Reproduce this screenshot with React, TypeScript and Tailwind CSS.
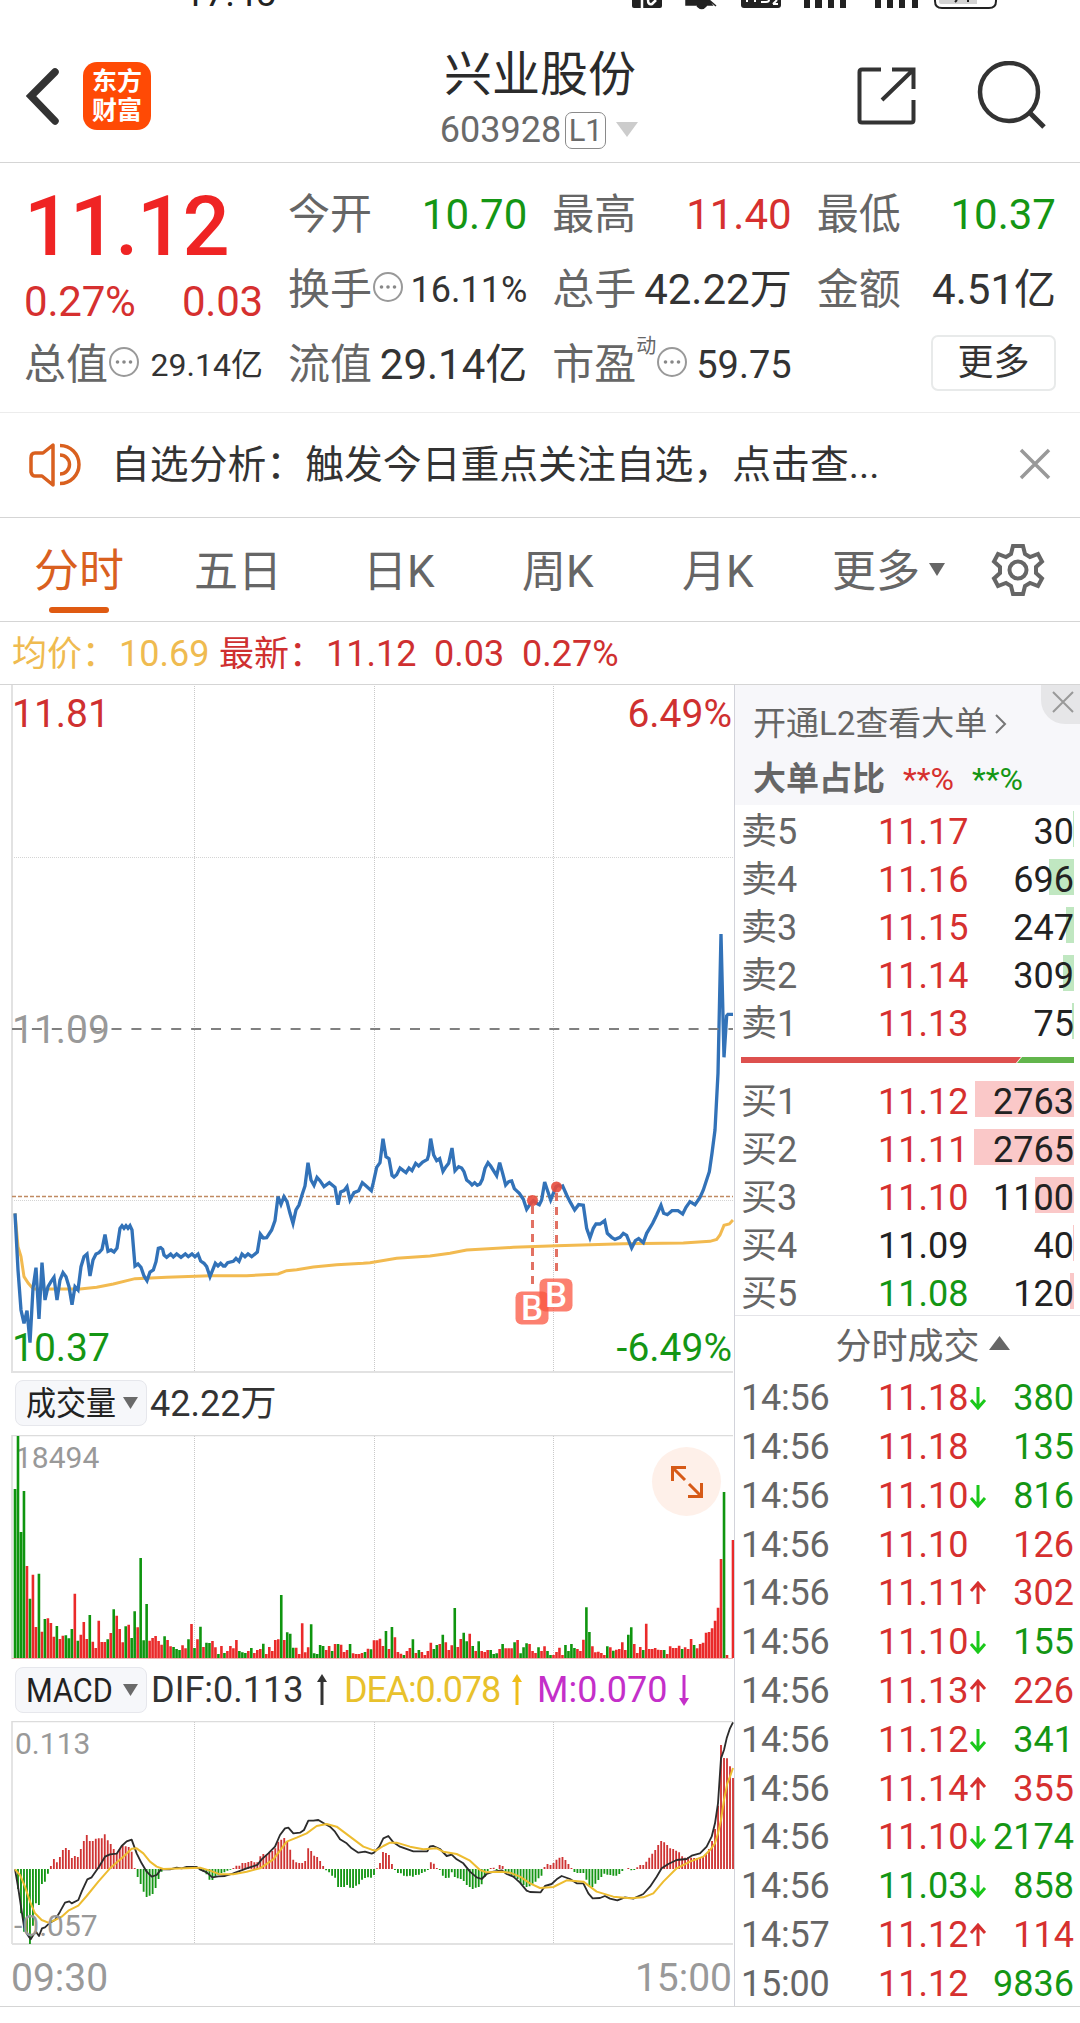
import React from 'react';
import clsx from 'clsx';

type Tone = 'up' | 'down' | 'flat';

interface Level {
  label: string;
  price: string;
  qty: string;
  bar: number;
  tone: Tone;
}

interface Trade {
  time: string;
  price: string;
  qty: string;
  arrow?: 'up' | 'down';
  tone: Tone;
  side: Tone;
}

const toneClass: Record<Tone, string> = {
  up: 'text-[#d6302f]',
  down: 'text-[#149614]',
  flat: 'text-[#222]',
};

const SELLS: Level[] = [
  { label: '卖5', price: '11.17', qty: '30', bar: 1, tone: 'up' },
  { label: '卖4', price: '11.16', qty: '696', bar: 25, tone: 'up' },
  { label: '卖3', price: '11.15', qty: '247', bar: 8, tone: 'up' },
  { label: '卖2', price: '11.14', qty: '309', bar: 11, tone: 'up' },
  { label: '卖1', price: '11.13', qty: '75', bar: 2, tone: 'up' },
];

const BUYS: Level[] = [
  { label: '买1', price: '11.12', qty: '2763', bar: 99, tone: 'up' },
  { label: '买2', price: '11.11', qty: '2765', bar: 100, tone: 'up' },
  { label: '买3', price: '11.10', qty: '1100', bar: 39, tone: 'up' },
  { label: '买4', price: '11.09', qty: '40', bar: 1, tone: 'flat' },
  { label: '买5', price: '11.08', qty: '120', bar: 4, tone: 'down' },
];

const TRADES: Trade[] = [
  { time: '14:56', price: '11.18', arrow: 'down', qty: '380', tone: 'up', side: 'down' },
  { time: '14:56', price: '11.18', qty: '135', tone: 'up', side: 'down' },
  { time: '14:56', price: '11.10', arrow: 'down', qty: '816', tone: 'up', side: 'down' },
  { time: '14:56', price: '11.10', qty: '126', tone: 'up', side: 'up' },
  { time: '14:56', price: '11.11', arrow: 'up', qty: '302', tone: 'up', side: 'up' },
  { time: '14:56', price: '11.10', arrow: 'down', qty: '155', tone: 'up', side: 'down' },
  { time: '14:56', price: '11.13', arrow: 'up', qty: '226', tone: 'up', side: 'up' },
  { time: '14:56', price: '11.12', arrow: 'down', qty: '341', tone: 'up', side: 'down' },
  { time: '14:56', price: '11.14', arrow: 'up', qty: '355', tone: 'up', side: 'up' },
  { time: '14:56', price: '11.10', arrow: 'down', qty: '2174', tone: 'up', side: 'down' },
  { time: '14:56', price: '11.03', arrow: 'down', qty: '858', tone: 'down', side: 'down' },
  { time: '14:57', price: '11.12', arrow: 'up', qty: '114', tone: 'up', side: 'up' },
  { time: '15:00', price: '11.12', qty: '9836', tone: 'up', side: 'down' },
];

// Chart series are kept in thirds of a pixel, one list per trading session.
const AFTERNOON_X = 1110;

const PRICE_AM = '45,940 54,1110 63,1230 72,1270 81,1232 90,1328 99,1165 108,1103 117,1257 126,1088 135,1200 144,1160 153,1145 162,1132 171,1200 180,1140 189,1118 198,1130 207,1160 216,1214 225,1160 234,1170 243,1100 252,1070 261,1062 270,1128 279,1080 288,1062 297,1058 306,1048 315,1004 324,1054 333,1050 342,1056 351,1044 360,985 366,977 372,985 378,977 384,985 390,977 396,990 405,1098 414,1092 423,1102 432,1128 441,1142 450,1116 460,1110 468,1085 475,1045 482,1043 488,1048 492,1065 500,1072 512,1062 520,1071 530,1062 543,1072 556,1062 565,1070 576,1062 585,1070 594,1062 602,1083 612,1090 620,1100 630,1130 646,1090 654,1098 662,1090 670,1098 675,1098 683,1088 700,1084 708,1075 717,1084 726,1062 735,1070 744,1062 755,1070 772,1056 781,1002 790,1014 800,1013 815,990 825,962 834,890 843,913 852,890 861,905 870,940 879,970 888,930 897,915 906,885 915,858 924,788 933,840 942,856 951,832 960,842 972,860 988,848 1005,862 1014,914 1022,876 1032,872 1041,860 1050,900 1062,878 1076,872 1087,848 1096,856 1114,872';
const PRICE_PM = '10,848 20,802 30,788 39,716 48,770 57,776 66,826 72,831 80,824 90,804 100,812 108,818 117,804 126,812 137,790 146,798 158,786 172,778 176,765 182,716 191,765 200,782 209,776 219,814 228,800 236,790 246,744 255,812 266,800 275,804 282,815 290,840 300,848 306,855 314,848 322,856 330,852 337,838 345,805 354,788 362,798 380,827 389,788 398,820 407,855 416,845 425,843 433,866 448,880 460,898 470,928 482,910 490,902 500,910 508,914 515,900 524,846 532,870 542,900 550,880 558,860 566,856 574,860 578,858 590,885 600,905 614,930 626,914 640,916 650,985 660,1014 670,985 678,972 690,972 704,962 712,1000 725,1012 735,1018 750,1012 760,1000 770,1006 785,1044 796,1022 806,1016 820,1028 830,1000 848,970 860,945 873,916 881,940 892,944 906,932 924,932 938,942 948,922 960,905 975,914 990,892 1000,870 1018,815 1026,760 1035,690 1044,520 1053,102 1062,472 1070,348 1074,343 1089,343';

const AVG_AM = '45,940 54,1040 63,1070 72,1130 85,1150 100,1167 240,1167 290,1162 340,1152 405,1136 500,1132 630,1127 740,1127 834,1122 860,1112 890,1109 940,1101 1010,1094 1090,1090';
const AVG_PM = '0,1088 80,1075 180,1068 240,1060 290,1050 430,1042 560,1037 760,1031 940,1029 1020,1024 1040,1018 1050,1005 1062,976 1078,972 1089,960';

const DIF_AM = '45,568 54,620 63,680 72,740 81,762 92,778 100,765 108,755 117,768 126,745 135,742 150,728 165,720 180,695 195,668 208,664 215,670 235,660 245,635 262,598 275,592 297,560 315,530 330,523 350,521 365,498 380,484 395,479 410,520 425,550 440,575 455,590 470,585 483,568 510,568 530,563 545,565 560,561 590,561 600,568 620,577 637,592 655,589 675,588 700,580 740,565 772,555 785,538 805,520 825,500 840,465 855,445 865,443 880,460 900,458 912,450 925,422 940,422 955,420 975,432 990,440 1005,455 1020,478 1040,490 1055,505 1075,518 1095,515';
const DIF_PM = '5,521 12,518 28,500 40,475 55,468 70,487 90,500 130,514 172,514 180,499 190,498 210,507 230,528 245,524 260,538 280,550 300,575 320,592 335,597 350,582 370,575 395,571 410,582 430,590 450,608 470,632 480,636 512,637 525,618 545,612 560,598 575,588 600,597 620,610 640,610 655,640 668,655 690,654 705,648 720,656 742,661 765,652 790,656 820,642 840,620 860,590 875,565 895,552 920,540 950,537 965,527 990,520 1010,500 1025,470 1035,430 1044,370 1053,235 1062,210 1070,175 1080,145 1089,127';

const DEA_AM = '45,568 60,585 75,620 90,665 105,700 125,720 145,728 165,720 185,710 205,692 235,677 260,648 295,605 330,565 370,530 395,506 410,505 430,520 450,545 470,560 490,567 600,563 630,572 660,583 700,583 740,575 780,565 820,538 860,485 890,473 920,460 950,438 980,432 1010,440 1050,470 1090,500';
const DEA_PM = '5,509 18,512 40,498 60,488 80,488 120,500 160,508 200,505 220,515 260,522 300,542 330,570 350,577 395,575 420,578 450,590 480,610 510,624 550,621 590,601 640,605 680,635 730,650 780,655 820,652 850,640 880,605 920,565 960,545 1000,530 1020,510 1035,490 1044,460 1053,420 1062,360 1072,310 1080,290 1089,264';

// Minute volumes, negative for a falling minute.
const VOLUME = [
  -507, -666, -378, -501, 276, -178, 250, 93, -253, 79, -117, 119, 105, 64, -96, 57, 67, -68, -59, -87,
  193, -52, 70, 108, 57, -129, 49, 30, 112, 48, 48, -56, 75, -146, 127, 87, 47, -95, 100, -60,
  -140, 92, -300, -53, -162, 52, 60, 66, 51, 40, -65, 54, 35, -33, -27, -24, 38, 29, -56, 102,
  -30, 56, -94, 33, -46, -45, 51, 32, -12, 36, -15, 21, 36, 29, 54, -21, -17, -15, 21, -30,
  15, 24, 27, -43, 12, 33, 21, 54, 56, -189, 54, -77, -73, -31, 31, 12, 104, 17, 32, -101,
  -14, -12, -39, -36, 24, 36, -21, 42, -42, 40, 18, 24, -42, 14, 12, 12, 15, -18, 28, -26,
  53, 53, 58, 36, -81, 27, -93, 62, 18, 13, -9, 21, 30, -56, 15, -24, 18, 9, 21, 46,
  -27, -39, 42, -70, 47, 24, 38, -150, 33, 57, -76, -50, 73, -36, 21, -50, 21, 18, 24, -24,
  -12, -14, 27, -42, 29, 29, 29, -47, 54, -14, -32, -44, 42, 21, 15, -32, 21, 35, -21, -9,
  9, 18, 31, 9, -39, -21, -42, -30, 27, 21, 55, -152, -78, 35, 17, 19, 15, 9, -35, 32,
  -22, 25, 27, 47, 24, -70, -92, 42, 15, 33, -24, 103, 27, 27, 30, 25, 24, -24, 12, 35,
  30, 30, 37, -27, 32, 27, 57, -39, 29, 42, 46, 76, 78, 89, 112, 151, 297, -498, 9, 0, 354,
];

const MACD = [
  0, -60, -133, -188, -195, -225, -170, -103, -108, -45, -38, -14, 9, 30, 20, 36, 57, 63, 57, 33,
  39, 36, 60, 84, 102, 84, 84, 91, 92, 92, 104, 86, 75, 60, 47, 60, 70, 68, 66, 52,
  3, -24, -45, -68, -84, -80, -75, -57, -30, -8, 2, 0, 2, 3, 2, 0, 3, 2, 2, 3,
  2, 2, -4, -8, -16, -32, -33, -22, -18, -12, -10, -5, -2, 3, 10, 10, 18, 18, 21, 24,
  20, 20, 38, 45, 42, 48, 54, 62, 82, 88, 93, 84, 58, 28, 20, 18, 18, 24, 62, 54,
  40, 36, 24, 9, -4, -10, -20, -26, -54, -54, -54, -48, -56, -57, -50, -46, -32, -27, -25,
  -26, -18, 2, 18, 51, 48, 42, 15, -3, -12, -13, -20, -22, -20, -23, -18, -17, -12, -8, -3, 20,
  16, 3, -3, -20, -27, -26, -10, -24, -28, -30, -36, -48, -54, -60, -56, -54, -46, -24, -6, 3,
  4, -3, 12, 9, -8, -13, -18, -24, -30, -42, -48, -54, -52, -44, -38, -28, -20, 6, 15, 12,
  18, 28, 34, 36, 27, 15, 3, -9, -12, -12, -12, -32, -52, -54, -44, -33, -24, -14, -17, -18,
  -20, -20, -15, -6, 0, 3, -4, -3, 5, 12, 12, 22, 34, 46, 57, 72, 84, 80, 72, 62,
  60, 55, 50, 38, 34, 36, 34, 33, 33, 34, 38, 45, 60, 84, 120, 190, 372, 333, 332, 308, 273,
];

function joinSessions(am: string, pm: string) {
  const shifted = pm.split(' ').map(p => {
    const [x, y] = p.split(',').map(Number);
    return `${x + AFTERNOON_X},${y}`;
  });
  return `${am} ${shifted.join(' ')}`;
}

function Bars({ data, base, width }: { data: number[]; base: number; width: number }) {
  const step = 2154 / 240;
  const path = (up: boolean, signed: boolean) =>
    data
      .map((v, i) => {
        if (v === 0 || v > 0 !== up) return '';
        const x = 45 + i * step - width / 2;
        const top = signed ? base - v : base - Math.abs(v);
        return `M${x.toFixed(1)} ${base}V${top}h${width}V${base}z`;
      })
      .join('');
  const signed = data === MACD;
  return (
    <>
      <path d={path(true, signed)} fill={signed ? '#cf3434' : '#ea2a2a'} />
      <path d={path(false, signed)} fill={signed ? '#159615' : '#0f950f'} />
    </>
  );
}

function GridLines({ height }: { height: number }) {
  return (
    <g stroke="#c9c9c9" strokeWidth="1" strokeDasharray="1 1">
      <path d={`M194.5 1V${height}`} />
      <path d={`M374.5 1V${height}`} />
      <path d={`M553.5 1V${height}`} />
    </g>
  );
}

function Dots() {
  return (
    <svg className="size-[30px] shrink-0" viewBox="0 0 30 30">
      <circle cx="15" cy="15" r="14" fill="none" stroke="#999" strokeWidth="2" />
      <g fill="#888">
        <circle cx="8.5" cy="15" r="1.8" />
        <circle cx="15" cy="15" r="1.8" />
        <circle cx="21.5" cy="15" r="1.8" />
      </g>
    </svg>
  );
}

function StatusBar() {
  return (
    <div className="flex h-[10px] pl-[184px]">
      <span className="-mt-[28px] w-[446px] text-[37px] leading-[44px] text-[#222]">17:45</span>
      <svg width="370" height="10" viewBox="630 0 370 10" fill="#222">
        <path d="M632 0h30v6q0 2-2 2h-26q-2 0-2-2z" />
        <path d="M642 0v8M648 0q0 5 4 4l4-4" fill="none" stroke="#fff" strokeWidth="2.500" />
        <path d="M686 0h22l4 5h-26zM697 6h9q-4 5-9 0M709 0l7 6" stroke="#222" strokeWidth="1.5" />
        <path d="M741 0h40v5q0 3-3 3h-34q-3 0-3-3z" />
        <path d="M747 0v2M755 0v2M761 2h5q3 0 3-2M773 4h5M777 0l-4 4" fill="none" stroke="#fff" strokeWidth="2" />
        <path d="M804 0h6v8h-6zM815 0h7v8h-7zM828 0h6v8h-6zM840 0h6v8h-6zM875 0h6v8h-6zM887 0h6v8h-6zM899 0h6v8h-6zM912 0h6v8h-6z" />
        <path d="M939 0h38v4h-36q-2 0-2-2z" fill="#d4d4d4" />
        <path d="M935 0v1q0 7 7 7h47q7 0 7-7V0" fill="none" stroke="#222" strokeWidth="2" />
        <path d="M957 0l-2 2M968 0v2" stroke="#222" strokeWidth="2" />
      </svg>
    </div>
  );
}

function Header() {
  return (
    <header className="flex h-[153px] border-b border-[#d5d5d5] pl-[26px]">
      <svg className="mt-[57px] h-[58px] w-[34px]" viewBox="0 0 34 58">
        <path d="M29 5L5 29l24 25" fill="none" stroke="#333" strokeWidth="7.5" strokeLinecap="round" />
      </svg>
      <div className="mt-[52px] ml-[23px] flex size-[68px] flex-col items-center justify-center rounded-[14px] bg-[#ff4a05] text-[25px] leading-[29px] font-bold text-white">
        <span>东方</span>
        <span>财富</span>
      </div>
      <div className="ml-[280px] flex w-[218px] flex-col items-center pt-[39px]">
        <h1 className="text-[48px] leading-[52px] font-normal whitespace-nowrap text-[#2b2b2b]">兴业股份</h1>
        <div className="mt-[9px] -ml-[2px] flex items-center text-[#6a6a6a]">
          <span className="text-[36px] leading-[40px]">603928</span>
          <span className="ml-[4px] flex h-[37px] w-[41px] items-center justify-center rounded-[7px] border-[1.5px] border-[#8a8a8a] text-[31px] leading-none">L1</span>
          <svg className="ml-[10px] h-[16px] w-[22px]" viewBox="0 0 22 16">
            <path d="M0 0h22L11 15z" fill="#ccc" />
          </svg>
        </div>
      </div>
      <svg className="mt-[56px] ml-[207px] size-[60px]" viewBox="0 0 60 60" fill="none" stroke="#333" strokeWidth="4">
        <path d="M25 3.500H6q-2.500 0-2.500 2.500v48q0 2.500 2.500 2.500h49q2.500 0 2.500-2.500V34" />
        <path d="M36 3.500h21.500V23M57 4L26 34" />
      </svg>
      <svg className="mt-[51px] ml-[60px] size-[72px]" viewBox="0 0 72 72" fill="none" stroke="#333" strokeWidth="4.500">
        <circle cx="33" cy="31" r="29" />
        <path d="M53 51l15 15" strokeWidth="5" />
      </svg>
    </header>
  );
}

function Cell({ label, children }: { label: string; children: React.ReactNode }) {
  return (
    <div className="flex h-[75px] items-center justify-between whitespace-nowrap">
      <span className="text-[42px] leading-none text-[#666]">{label}</span>
      {children}
    </div>
  );
}

function Quote() {
  return (
    <section className="flex h-[250px] border-b border-[#ececec] pr-[24px] pl-[24px]">
      <div className="w-[239px] shrink-0">
        <div className="mt-[19px] h-[90px] text-[83px] leading-[90px] font-medium tracking-[-1.5px] text-[#ef2424]">11.12</div>
        <div className="mt-[8px] flex justify-between text-[42px] leading-[44px] tracking-[-0.2px] text-[#d6302f]">
          <span>0.27%</span>
          <span>0.03</span>
        </div>
        <div className="mt-[20px] flex h-[42px] items-center justify-between whitespace-nowrap">
          <div className="flex items-center">
            <span className="text-[42px] leading-none text-[#666]">总值</span>
            <div className="-mt-[6px] ml-[1px]"><Dots /></div>
          </div>
          <span className="text-[32px] leading-none text-[#333]">29.14亿</span>
        </div>
      </div>
      <div className="ml-[25px] grid flex-1 grid-cols-3 content-start gap-x-[25px] pt-[14px] text-[42px] leading-none text-[#333]">
        <Cell label="今开"><span className="text-[#149614]">10.70</span></Cell>
        <Cell label="最高"><span className="text-[#d6302f]">11.40</span></Cell>
        <Cell label="最低"><span className="text-[#149614]">10.37</span></Cell>
        <div className="flex h-[75px] items-center whitespace-nowrap">
          <span className="text-[42px] text-[#666]">换手</span>
          <div className="-mt-[6px] ml-[1px]"><Dots /></div>
          <span className="ml-auto text-[36px]">16.11%</span>
        </div>
        <Cell label="总手"><span>42.22万</span></Cell>
        <Cell label="金额"><span>4.51亿</span></Cell>
        <Cell label="流值"><span>29.14亿</span></Cell>
        <div className="flex h-[75px] items-center whitespace-nowrap">
          <span className="text-[42px] text-[#666]">市盈</span>
          <span className="-mt-[38px] text-[20px] text-[#666]">动</span>
          <div className="-mt-[6px] ml-[1px]"><Dots /></div>
          <span className="ml-auto text-[38px]">59.75</span>
        </div>
        <div className="flex h-[75px] items-center justify-end">
          <button className="mb-[4px] h-[56px] w-[125px] rounded-[7px] border-2 border-[#e8eaea] text-[36px] leading-none">更多</button>
        </div>
      </div>
    </section>
  );
}

function Notice() {
  return (
    <div className="flex h-[105px] items-center border-b border-[#d5d5d5] pl-[28px]">
      <svg className="h-[46px] w-[54px]" viewBox="0 0 54 46" fill="none" stroke="#d9601f" strokeWidth="3.500">
        <path d="M25 3v40L14 34H7q-3 0-4-4V16q0-5 4-5h8z" strokeLinejoin="round" />
        <path d="M32 3.500a19 19 0 0 1 0 38" />
        <path d="M32 13a9.500 9.500 0 0 1 0 19" />
      </svg>
      <span className="ml-[29px] text-[38.85px] leading-none whitespace-nowrap text-[#333]">自选分析：触发今日重点关注自选，点击查...</span>
      <svg className="mr-[29px] mb-[2px] ml-auto size-[32px]" viewBox="0 0 32 32">
        <path d="M2 2l28 28M30 2L2 30" stroke="#999" strokeWidth="3.500" />
      </svg>
    </div>
  );
}

function Tabs() {
  return (
    <nav className="flex h-[104px] border-b border-[#d5d5d5] pt-[30px] text-[44px] leading-[48px] whitespace-nowrap text-[#666]">
      <div className="ml-[34px] flex w-[160px] flex-col text-[#d9601f]">
        <span className="text-[45px]">分时</span>
        <span className="mt-[11px] ml-[15px] h-[6px] w-[60px] rounded-full bg-[#df5a12]" />
      </div>
      <span className="w-[169px]">五日</span>
      <span className="w-[159px]">日K</span>
      <span className="w-[160px]">周K</span>
      <span className="w-[150px]">月K</span>
      <span>更多</span>
      <svg className="mt-[15px] ml-[9px] h-[13px] w-[16px]" viewBox="0 0 16 13">
        <path d="M0 0h16L8 13z" fill="#666" />
      </svg>
      <svg className="-mt-[6px] ml-[45px] size-[56px]" viewBox="-28 -28 56 56" fill="none" stroke="#666" strokeWidth="4">
        <path d="M-5 -24H5L7 -16L12 -13L20 -16L24 -8.500L18 -3V3L24 8.500L20 16L12 13L7 16L5 24H-5L-7 16L-12 13L-20 16L-24 8.500L-18 3V-3L-24 -8.500L-20 -16L-12 -13L-7 -16Z" />
        <circle r="8.500" />
      </svg>
    </nav>
  );
}

function Summary() {
  return (
    <div className="flex h-[63px] items-center border-b border-[#d5d5d5] pt-[2px] pl-[12px] text-[36px] leading-none whitespace-nowrap text-[#cf3030]">
      <span className="w-[107px] text-[35px] text-[#efbb50]">均价：</span>
      <span className="w-[100px] text-[#efbb50]">10.69</span>
      <span className="w-[107px] text-[35px]">最新：</span>
      <span className="w-[108px]">11.12</span>
      <span className="w-[88px]">0.03</span>
      <span>0.27%</span>
    </div>
  );
}

function Marker({ x, y }: { x: number; y: number }) {
  return (
    <g>
      <rect x={x - 16.5} y={y - 16.5} width="33" height="33" rx="6" fill="#fb5540" fillOpacity=".75" />
      <text x={x} y={y + 12} textAnchor="middle" fontSize="35" fontWeight="500" fill="#fff">B</text>
    </g>
  );
}

function PriceChart() {
  return (
    <div className="relative h-[689px]">
      <svg className="block" width="734" height="689" viewBox="0 0 734 689">
        <GridLines height={686} />
        <path d="M12 172.500H734M12 515.500H734" stroke="#d4d4d4" strokeDasharray="1 1" />
        <path d="M12 0V687H733" fill="none" stroke="#e2e2e2" strokeWidth="2" />
        <path d="M12 511.500H733" stroke="#c08a62" strokeWidth="1.500" strokeDasharray="4 2" />
        <g transform="translate(0 215) scale(.33333)" fill="none">
          <polyline points={joinSessions(AVG_AM, AVG_PM)} stroke="#f2ba50" strokeWidth="9" />
          <polyline points={joinSessions(PRICE_AM, PRICE_PM)} stroke="#3272b8" strokeWidth="10" />
        </g>
        <g stroke="#e27264" strokeWidth="3" strokeDasharray="8 6">
          <path d="M532.500 521V605" />
          <path d="M556.500 508V592" />
        </g>
        <circle cx="532.500" cy="515.500" r="5.500" fill="#e84c3d" fillOpacity=".9" />
        <circle cx="556.500" cy="502" r="5.500" fill="#e84c3d" fillOpacity=".9" />
        <Marker x={532} y={623} />
        <Marker x={556} y={610} />
      </svg>
      <span className="absolute top-[8px] left-[12px] text-[39px] leading-[42px] text-[#cf3030]">11.81</span>
      <span className="absolute top-[8px] right-[2px] text-[39px] leading-[42px] text-[#cf3030]">6.49%</span>
      <span className="absolute top-[324px] left-[12px] text-[39px] leading-[42px] text-[#999]">11.09</span>
      <span className="absolute top-[642px] left-[12px] text-[39px] leading-[42px] text-[#149614]">10.37</span>
      <span className="absolute top-[642px] right-[2px] text-[39px] leading-[42px] text-[#149614]">-6.49%</span>
      <svg className="absolute top-[343px] left-0" width="734" height="2">
        <path d="M12 1H733" stroke="#808080" strokeWidth="2" strokeDasharray="10 9.900" />
      </svg>
    </div>
  );
}

function Picker({ children }: { children: React.ReactNode }) {
  return (
    <div className="flex h-[46px] w-[132px] items-center rounded-[8px] border border-[#e6e7ec] bg-[#f6f7fa] pl-[10px] text-[#222]">
      <span className="w-[97px] whitespace-nowrap">{children}</span>
      <svg className="h-[12px] w-[15px]" viewBox="0 0 15 12">
        <path d="M0 0h15L7.500 12z" fill="#6a6a6a" />
      </svg>
    </div>
  );
}

function Arrow({ down = false }: { down?: boolean }) {
  return (
    <svg className={clsx('h-[32px] w-[12px]', down && 'rotate-180')} viewBox="0 0 12 32">
      <path d="M6 31V6" stroke="currentColor" strokeWidth="3" />
      <path d="M6 0l5 8H1z" fill="currentColor" />
    </svg>
  );
}

function VolumeChart() {
  return (
    <>
      <div className="flex h-[61px] items-center pb-[3px] pl-[15px] leading-none">
        <Picker><span className="inline-block origin-left scale-x-[0.91] text-[33px]">成交量</span></Picker>
        <span className="mt-[2px] ml-[3px] text-[36px] text-[#333]">42.22万</span>
      </div>
      <div className="relative h-[225px]">
        <svg className="block" width="734" height="225" viewBox="0 0 734 225">
          <GridLines height={223} />
          <path d="M12 224V.5H733" fill="none" stroke="#dcdcdc" strokeWidth="1.500" />
          <path d="M12 223.500H733" stroke="#f0b0b0" />
        </svg>
        <span className="absolute top-[7px] left-[15px] text-[30px] leading-[32px] text-[#999]">18494</span>
        <svg className="absolute top-0 left-0" width="734" height="225" viewBox="0 0 734 225">
          <g transform="translate(0 -65) scale(.33333)">
            <Bars data={VOLUME} base={864} width={7.8} />
          </g>
        </svg>
        <div className="absolute top-[12px] left-[652px] flex size-[69px] items-center justify-center rounded-full bg-[#fef0e9]">
          <svg className="size-[34px]" viewBox="0 0 34 34" fill="none" stroke="#d65a17" strokeWidth="3">
            <path d="M2.500 16V2.500H16M3 3l12 12M31.500 18v13.500H18M31 31L19 19" />
          </svg>
        </div>
      </div>
    </>
  );
}

function MacdChart() {
  return (
    <>
      <div className="flex h-[61px] items-center pb-[2px] pl-[15px] text-[36px] leading-none whitespace-nowrap">
        <Picker><span className="inline-block origin-left scale-x-[0.9] text-[34px]">MACD</span></Picker>
        <span className="ml-[4px] w-[169px] text-[#333]">DIF:0.113</span>
        <span className="-ml-[4px] text-[#333]"><Arrow /></span>
        <span className="ml-[16px] w-[168px] tracking-[-1.2px] text-[#e8c12c]">DEA:0.078</span>
        <span className="-ml-[1px] text-[#f0bd18]"><Arrow /></span>
        <span className="ml-[14px] w-[141px] text-[#c42fc9]">M:0.070</span>
        <span className="text-[#c42fc9]"><Arrow down /></span>
      </div>
      <div className="relative h-[225px]">
        <svg className="block" width="734" height="225" viewBox="0 0 734 225">
          <GridLines height={222} />
          <path d="M12 223V.5H733" fill="none" stroke="#dcdcdc" strokeWidth="1.500" />
          <path d="M12 223H733" stroke="#e2e2e2" strokeWidth="2" />
          <g transform="translate(0 -41) scale(.33333)" fill="none">
            <Bars data={MACD} base={567} width={5.5} />
            <polyline points={joinSessions(DIF_AM, DIF_PM)} stroke="#2c2c2c" strokeWidth="5.500" strokeLinejoin="round" />
            <polyline points={joinSessions(DEA_AM, DEA_PM)} stroke="#edbc30" strokeWidth="6" strokeLinejoin="round" />
          </g>
        </svg>
        <span className="absolute top-[7px] left-[15px] text-[30px] leading-[32px] text-[#999]">0.113</span>
        <span className="absolute top-[189px] left-[14px] text-[30px] leading-[32px] text-[#999]">-0.057</span>
      </div>
      <div className="flex h-[60px] items-center justify-between pt-[4px] pr-[2px] pl-[11px] text-[39px] leading-none text-[#999]">
        <span>09:30</span>
        <span>15:00</span>
      </div>
    </>
  );
}

function LevelRow({ level, side }: { level: Level; side: 'sell' | 'buy' }) {
  return (
    <div className="relative flex h-[48px] items-center pt-[6px] pr-[6px] pl-[6px] text-[36px] leading-none">
      <div
        className={clsx('absolute top-[6px] right-[6px] h-[36px]', side === 'sell' ? 'bg-[#c0e7c1]' : 'bg-[#fac8c8]')}
        style={{ width: level.bar }}
      />
      <span className="w-[137px] text-[#666]">{level.label}</span>
      <span className={clsx('relative', toneClass[level.tone])}>{level.price}</span>
      <span className="relative ml-auto text-[#222]">{level.qty}</span>
    </div>
  );
}

function TradeRow({ trade }: { trade: Trade }) {
  return (
    <div className="flex flex-1 items-center pr-[6px] pl-[6px] text-[36px] leading-none">
      <span className="w-[137px] tracking-[-0.2px] text-[#666]">{trade.time}</span>
      <span className={toneClass[trade.tone]}>{trade.price}</span>
      {trade.arrow && (
        <svg
          className={clsx('ml-[1px] h-[24px] w-[18px]', trade.arrow === 'down' ? 'rotate-180 text-[#1ac81a]' : 'text-[#d6302f]')}
          viewBox="0 0 18 24"
          fill="none"
          stroke="currentColor"
          strokeWidth="3"
        >
          <path d="M9 23V3M2 10l7-8 7 8" />
        </svg>
      )}
      <span className={clsx('ml-auto', toneClass[trade.side])}>{trade.qty}</span>
    </div>
  );
}

function OrderBook() {
  return (
    <aside className="flex h-[1321px] w-[346px] flex-col border-l border-[#d2d3da]">
      <div className="relative h-[120px] bg-[#f7f7fa] pt-[20px] pl-[18px] whitespace-nowrap text-[#666]">
        <div className="flex items-center text-[33px] leading-[38px]">
          <span>开通L2查看大单</span>
          <svg className="ml-[7px] h-[22px] w-[13px]" viewBox="0 0 13 22">
            <path d="M2 2l9 9-9 9" fill="none" stroke="#777" strokeWidth="2" />
          </svg>
        </div>
        <div className="mt-[17px] flex items-center leading-[38px]">
          <span className="text-[33px] font-bold">大单占比</span>
          <span className="ml-[18px] text-[32px] text-[#d6302f]">**%</span>
          <span className="ml-[18px] text-[32px] text-[#149614]">**%</span>
        </div>
        <div className="absolute top-0 right-0 flex h-[39px] w-[39px] items-center justify-center rounded-bl-[24px] bg-[#e6e6e8] pl-[5px]">
          <svg className="-mt-[6px] size-[22px]" viewBox="0 0 22 22">
            <path d="M1 1l20 20M21 1L1 21" stroke="#999" strokeWidth="2" />
          </svg>
        </div>
      </div>
      {SELLS.map(level => <LevelRow key={level.label} level={level} side="sell" />)}
      <div className="flex h-[30px] items-center pl-[6px]">
        <svg width="333" height="6" viewBox="0 0 333 6">
          <path d="M0 0h280l-5 6H0z" fill="#dd504e" />
          <path d="M281 0h52v6h-57z" fill="#62b54c" />
        </svg>
      </div>
      {BUYS.map(level => <LevelRow key={level.label} level={level} side="buy" />)}
      <div className="flex h-[59px] shrink-0 items-center justify-center border-t border-[#e4e4e8] pt-[3px] pl-[30px] text-[36px] leading-none text-[#666]">
        <span>分时成交</span>
        <svg className="-mt-[8px] ml-[9px] h-[14px] w-[21px]" viewBox="0 0 21 14">
          <path d="M0 14L10.500 0 21 14z" fill="#666" />
        </svg>
      </div>
      <div className="-mb-[2px] flex flex-1 flex-col">
        {TRADES.map((trade, i) => <TradeRow key={i} trade={trade} />)}
      </div>
    </aside>
  );
}

export default function App() {
  return (
    <div className="h-[2023px] w-[1080px] overflow-hidden bg-white font-[Roboto,'Noto_Sans_CJK_SC',sans-serif]">
      <StatusBar />
      <Header />
      <Quote />
      <Notice />
      <Tabs />
      <Summary />
      <div className="flex border-b border-[#d5d5d5]">
        <div className="w-[734px] shrink-0">
          <PriceChart />
          <VolumeChart />
          <MacdChart />
        </div>
        <OrderBook />
      </div>
    </div>
  );
}
